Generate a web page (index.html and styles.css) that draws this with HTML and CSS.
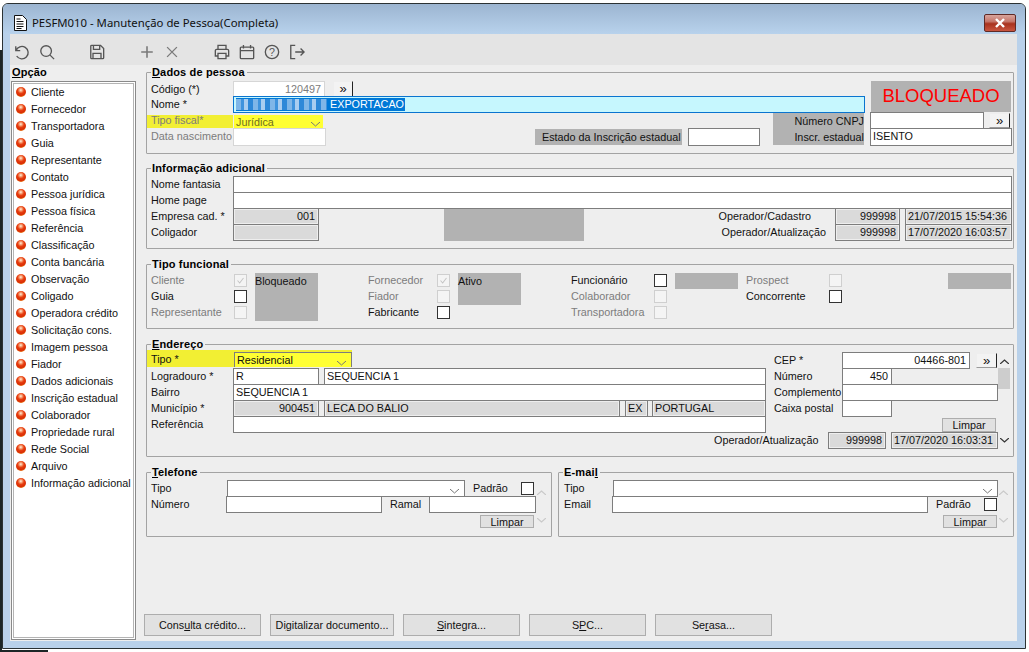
FILE: index.html
```html
<!DOCTYPE html>
<html lang="pt">
<head>
<meta charset="utf-8">
<title>PESFM010</title>
<link rel="stylesheet" href="styles.css">
</head>
<body>
<div class="window">
  <header class="titlebar">
    <svg class="doc-icon" viewBox="0 0 14 16" width="14" height="16"><path d="M1.5.5h8l4 4v11h-12z" fill="#fff" stroke="#111"/><path d="M3.5 4h4M3.5 6.500h7M3.500 9h7M3.500 11.500h7M3.500 13.500h5" stroke="#111" fill="none"/></svg>
    <span class="title">PESFM010 - Manutenção de Pessoa(Completa)</span>
    <span class="close"><svg viewBox="0 0 12 10" width="12" height="10"><path d="M2 1l8 8M10 1l-8 8" stroke="#fff" stroke-width="2.400" fill="none"/></svg></span>
  </header>
  <div class="content">
    <nav class="toolbar">
      <span class="tool"><svg viewBox="0 0 18 18"><path d="M2 2.500v5h5M2.300 7.500a7 7 0 1 1 .7 6"/></svg></span>
      <span class="tool"><svg viewBox="0 0 18 18"><circle cx="8" cy="8" r="6"/><path d="M12.500 12.500l4.500 4.500"/></svg></span>
      <span class="tool"></span>
      <span class="tool"><svg viewBox="0 0 18 18"><path d="M2 2.500a1 1 0 0 1 1-1h10l3.500 3.500v10.500a1 1 0 0 1-1 1h-12.500a1 1 0 0 1-1-1zM5 1.500v4.500h7v-4.500M4.500 16.500v-6h9v6"/></svg></span>
      <span class="tool"></span>
      <span class="tool tool-light"><svg viewBox="0 0 18 18"><path d="M9 2.500v13M2.500 9h13" stroke-width="1.800"/></svg></span>
      <span class="tool tool-light"><svg viewBox="0 0 18 18"><path d="M3.500 3.500l11 11M14.500 3.500l-11 11"/></svg></span>
      <span class="tool"></span>
      <span class="tool"><svg viewBox="0 0 18 18"><path d="M4.500 6v-4.500h9v4.500M4.500 13.500h-3v-6a1.500 1.500 0 0 1 1.500-1.500h12a1.500 1.500 0 0 1 1.500 1.500v6h-3M4.500 10.500h9v6h-9z"/></svg></span>
      <span class="tool"><svg viewBox="0 0 18 18"><path d="M2.500 3.500h13a1 1 0 0 1 1 1v11a1 1 0 0 1-1 1h-13a1 1 0 0 1-1-1v-11a1 1 0 0 1 1-1zM1.500 7.500h15M5 1v4M13 1v4"/></svg></span>
      <span class="tool"><svg viewBox="0 0 18 18"><circle cx="9" cy="9" r="7.500"/><text x="9" y="13" class="help-q">?</text></svg></span>
      <span class="tool"><svg viewBox="0 0 18 18"><path d="M7 1.500h-5v15h5M7 9h10M13 5l4 4-4 4"/></svg></span>
    </nav>
    <div class="body">
      <aside class="sidebar">
        <div class="side-label"><u>O</u>pção</div>
        <ul class="list">
          <li>Cliente</li><li>Fornecedor</li><li>Transportadora</li><li>Guia</li><li>Representante</li><li>Contato</li>
          <li>Pessoa jurídica</li><li>Pessoa física</li><li>Referência</li><li>Classificação</li><li>Conta bancária</li><li>Observação</li>
          <li>Coligado</li><li>Operadora crédito</li><li>Solicitação cons.</li><li>Imagem pessoa</li><li>Fiador</li><li>Dados adicionais</li>
          <li>Inscrição estadual</li><li>Colaborador</li><li>Propriedade rural</li><li>Rede Social</li><li>Arquivo</li><li>Informação adicional</li>
        </ul>
      </aside>
      <main class="main">
        <section class="group g1">
          <div class="legend"><u>D</u>ados de pessoa</div>
          <div class="g1-body">
            <div class="g1-left">
              <div class="g1-top">
                <div class="row r15"><span class="lbl">Código (*)</span><span class="in soft w92 right grey-text">120497</span><span class="more ml8 w20">»</span></div>
                <div class="row"><span class="lbl">Nome *</span><span class="in focus w632"><span class="sel"><span class="blur"></span> EXPORTACAO</span></span></div>
              </div>
              <div class="g1-bottom">
                <div class="g1-fields">
                  <div class="row r13"><span class="hl-small"><span class="lbl grey-text">Tipo fiscal*</span></span><span class="select-y">Jurídica<svg class="arrow" viewBox="0 0 9 5"><path d="M0 0l4.500 4 4.500-4"/></svg></span></div>
                  <div class="row r18"><span class="lbl grey-text">Data nascimento</span><span class="in soft w93 h18"></span><span class="tag w147 ml209">Estado da Inscrição estadual</span><span class="in w72 ml6 h18"></span></div>
                </div>
                <div class="cnpj-labels"><span>Número CNPJ</span><span>Inscr. estadual</span></div>
              </div>
            </div>
            <div class="g1-right">
              <div class="status">BLOQUEADO</div>
              <div class="row cnpj"><span class="in w114"></span><span class="more ml5 w21 more-low">»</span></div>
              <div class="row r18"><span class="in w142 h18">ISENTO</span></div>
            </div>
          </div>
        </section>

        <section class="group g2">
          <div class="legend">Informação adicional</div>
          <div class="rows">
            <div class="row"><span class="lbl">Nome fantasia</span><span class="in w779"></span></div>
            <div class="row"><span class="lbl">Home page</span><span class="in w779"></span></div>
            <div class="row-pair">
              <div class="pair-left">
                <div class="row"><span class="lbl">Empresa cad. *</span><span class="in off w86 right">001</span></div>
                <div class="row"><span class="lbl">Coligador</span><span class="in off w86"></span></div>
              </div>
              <div class="g2-block"></div>
              <div class="pair-right">
                <div class="row"><span class="op-label op1">Operador/Cadastro</span><span class="in off w65 right">999998</span><span class="in off w107 ml5">21/07/2015 15:54:36</span></div>
                <div class="row"><span class="op-label op2">Operador/Atualização</span><span class="in off w65 right">999998</span><span class="in off w107 ml5">17/07/2020 16:03:57</span></div>
              </div>
            </div>
          </div>
        </section>

        <section class="group g3">
          <div class="legend">Tipo funcional</div>
          <div class="func">
            <div class="fcol">
              <div class="checks">
                <label class="row fw87 grey-text"><span class="flbl">Cliente</span><span class="check soft-check"><svg viewBox="0 0 13 13"><path d="M3 6.500l2.500 3 4.500-6"/></svg></span></label>
                <label class="row fw87"><span class="flbl">Guia</span><span class="check"></span></label>
                <label class="row fw87 grey-text"><span class="flbl">Representante</span><span class="check soft-check"></span></label>
              </div>
              <div class="fblock h48">Bloqueado</div>
            </div>
            <div class="fcol ml46">
              <div class="checks">
                <label class="row fw73 grey-text"><span class="flbl">Fornecedor</span><span class="check soft-check"><svg viewBox="0 0 13 13"><path d="M3 6.500l2.500 3 4.500-6"/></svg></span></label>
                <label class="row fw73 grey-text"><span class="flbl">Fiador</span><span class="check soft-check"></span></label>
                <label class="row fw73"><span class="flbl">Fabricante</span><span class="check"></span></label>
              </div>
              <div class="fblock h32">Ativo</div>
            </div>
            <div class="fcol ml46">
              <div class="checks">
                <label class="row fw87"><span class="flbl">Funcionário</span><span class="check"></span></label>
                <label class="row fw87 grey-text"><span class="flbl">Colaborador</span><span class="check soft-check"></span></label>
                <label class="row fw87 grey-text"><span class="flbl">Transportadora</span><span class="check soft-check"></span></label>
              </div>
              <div class="fblock h16"></div>
            </div>
            <div class="fcol ml4">
              <div class="checks">
                <label class="row fw87 grey-text"><span class="flbl">Prospect</span><span class="check soft-check"></span></label>
                <label class="row fw87"><span class="flbl">Concorrente</span><span class="check"></span></label>
              </div>
              <div class="fblock h16 ml106"></div>
            </div>
          </div>
        </section>

        <section class="group g4">
          <div class="legend"><u>E</u>ndereço</div>
          <div class="end-wrap">
            <div class="end-content">
              <div class="end-top">
                <div class="end-left">
                  <div class="row"><span class="hl"><span class="lbl lbl-hl">Tipo *</span><span class="select-strong">Residencial<svg class="arrow" viewBox="0 0 9 5"><path d="M0 0l4.500 4 4.500-4"/></svg></span></span></div>
                  <div class="row"><span class="lbl">Logradouro *</span><span class="in w86">R</span><span class="in w442 ml5">SEQUENCIA 1</span></div>
                  <div class="row"><span class="lbl">Bairro</span><span class="in w533">SEQUENCIA 1</span></div>
                  <div class="row"><span class="lbl">Município *</span><span class="in off w86 right">900451</span><span class="in off w296 ml5">LECA DO BALIO</span><span class="in off w23 ml5">EX</span><span class="in off w114 ml4">PORTUGAL</span></div>
                  <div class="row"><span class="lbl">Referência</span><span class="in w533"></span></div>
                </div>
                <div class="end-right">
                  <div class="row"><span class="rlbl">CEP *</span><span class="in w128 right">04466-801</span><span class="more ml6 w21 more-low">»</span></div>
                  <div class="row"><span class="rlbl">Número</span><span class="in w50 right">450</span></div>
                  <div class="row"><span class="rlbl">Complemento</span><span class="in w156"></span></div>
                  <div class="row"><span class="rlbl">Caixa postal</span><span class="in w50"></span></div>
                  <div class="limpar-row"><span class="limpar">Limpar</span></div>
                </div>
              </div>
              <div class="row end-op"><span class="op-label op3">Operador/Atualização</span><span class="in off w58 right">999998</span><span class="in off w107 ml5">17/07/2020 16:03:31</span></div>
            </div>
            <div class="scroll">
              <svg class="chev" viewBox="0 0 9 5"><path d="M0 5l4.500-4 4.500 4"/></svg>
              <span class="thumb"></span>
              <svg class="chev chev-down" viewBox="0 0 9 5"><path d="M0 0l4.500 4 4.500-4"/></svg>
            </div>
          </div>
        </section>

        <div class="contacts">
          <section class="group g5 g-tel">
            <div class="legend"><u>T</u>elefone</div>
            <div class="con-wrap">
              <div class="con-rows">
                <div class="row"><span class="lbl w80">Tipo</span><span class="in w238 has-arrow"><svg class="arrow" viewBox="0 0 9 5"><path d="M0 0l4.500 4 4.500-4"/></svg></span><span class="con-lbl ml8 w48">Padrão</span><span class="check check-top"></span></div>
                <div class="row"><span class="lbl w79">Número</span><span class="in w156"></span><span class="con-lbl ml8 w39">Ramal</span><span class="in w107"></span></div>
                <div class="limpar-line"><span class="limpar ml333">Limpar</span></div>
              </div>
              <div class="scroll scroll-light">
                <svg class="chev" viewBox="0 0 9 5"><path d="M0 5l4.500-4 4.500 4"/></svg>
                <svg class="chev chev-down" viewBox="0 0 9 5"><path d="M0 0l4.500 4 4.500-4"/></svg>
              </div>
            </div>
          </section>
          <section class="group g5 g-mail">
            <div class="legend">E-mai<u>l</u></div>
            <div class="con-wrap">
              <div class="con-rows mail-rows">
                <div class="row"><span class="lbl lbl-m w53">Tipo</span><span class="in w385 has-arrow"><svg class="arrow" viewBox="0 0 9 5"><path d="M0 0l4.500 4 4.500-4"/></svg></span></div>
                <div class="row"><span class="lbl lbl-m w52">Email</span><span class="in w316"></span><span class="con-lbl ml8 w48">Padrão</span><span class="check check-top"></span></div>
                <div class="limpar-line"><span class="limpar ml384">Limpar</span></div>
              </div>
              <div class="scroll scroll-light">
                <svg class="chev" viewBox="0 0 9 5"><path d="M0 5l4.500-4 4.500 4"/></svg>
                <svg class="chev chev-down" viewBox="0 0 9 5"><path d="M0 0l4.500 4 4.500-4"/></svg>
              </div>
            </div>
          </section>
        </div>

        <div class="actions">
          <button class="action w117">Cons<u>u</u>lta crédito...</button>
          <button class="action w124">Di<u>g</u>italizar documento...</button>
          <button class="action w117"><u>S</u>integra...</button>
          <button class="action w117">S<u>P</u>C...</button>
          <button class="action w117">Se<u>r</u>asa...</button>
        </div>
      </main>
    </div>
  </div>
</div>
</body>
</html>
```
FILE: styles.css
```css
* { box-sizing: border-box; }
html, body { margin: 0; height: 100%; }
body {
  width: 1029px;
  height: 652px;
  overflow: hidden;
  background:
    linear-gradient(#1c2526, #1c2526) 0 50px / 2px 602px no-repeat,
    linear-gradient(#1c2526, #1c2526) 0 650px / 48px 2px no-repeat,
    #fff;
  font: 10.800px/14px "Liberation Sans", Arial, sans-serif;
  color: #111;
  padding: 3px 0 0 2px;
}
.window {
  width: 1024px;
  height: 646px;
  border: 1px solid #2b3234;
  border-radius: 6px 6px 0 0;
  background: #b9d1ea;
  padding: 0 8px 7px 7px;
  display: flex;
  flex-direction: column;
}
.titlebar {
  margin: 0 -8px 0 -7px;
  height: 30px;
  flex: none;
  background: linear-gradient(#9cb5d1, #b8d2ec);
  border-radius: 5px 5px 0 0;
  display: flex;
  align-items: center;
  padding: 7px 9px 0 10px;
}
.doc-icon { flex: none; }
.title {
  margin-left: 5px;
  font: 11.350px/16px "Noto Sans", sans-serif;
  color: #111;
  flex: 1;
}
.close {
  width: 32px;
  height: 18px;
  border: 1px solid #5f2a26;
  border-radius: 2px;
  background: linear-gradient(#d8a49c 0, #c6776b 40%, #a8321e 55%, #c9553f 100%);
  display: flex;
  align-items: center;
  justify-content: center;
}
.content {
  flex: 1;
  min-height: 0;
  background: #eee;
  display: flex;
  flex-direction: column;
}
.toolbar {
  height: 31px;
  flex: none;
  background: #e4e4e4;
  display: flex;
  align-items: center;
  padding: 4px 0 0 3px;
}
.tool { width: 25px; height: 16px; display: block; padding-left: 1px; }
.tool svg { width: 16px; height: 16px; display: block; fill: none; stroke: #555; stroke-width: 1.500; }
.tool-light svg { stroke: #7a7a7a; }
.tool svg .help-q { font: 12px "Liberation Sans", sans-serif; text-anchor: middle; fill: #555; stroke: none; }
.body { flex: 1; min-height: 0; display: flex; }

.sidebar { width: 136px; flex: none; padding: 0 0 1px 1px; display: flex; flex-direction: column; }
.side-label { height: 16px; line-height: 15px; font-size: 11px; letter-spacing: .15px; font-weight: bold; padding-left: 1px; color: #000; }
.list {
  flex: 1;
  margin: 0;
  padding: 2px 0 0 4px;
  list-style: none;
  width: 125px;
  background: #fff;
  border: 1px solid #8a8a8a;
  box-shadow: inset 0 0 0 1px #fff, inset 0 0 0 2px #b4b4b4;
}
.list li { height: 17px; line-height: 17px; display: flex; align-items: center; white-space: nowrap; }
.list li::before {
  content: "";
  flex: none;
  width: 10px;
  height: 10px;
  margin: -2px 5px 0 0;
  border-radius: 50%;
  background: radial-gradient(circle at 48% 32%, #fff2e0 0, #f8b088 14%, #e8400f 38%, #d92c06 62%, #f09a18 88%, #c98a30 100%);
}

.main { flex: 1; min-width: 0; padding: 7px 3px 5px 0; display: flex; flex-direction: column; }
.group { border: 1px solid #a3a3a3; border-radius: 1px; margin-top: 15px; flex: none; }
.legend {
  margin: -8px 0 0 4px;
  padding: 0 2px 0 1px;
  width: fit-content;
  height: 14px;
  line-height: 14px;
  font-size: 11px;
  letter-spacing: .15px;
  background: #eee;
  font-weight: bold;
  color: #000;
}
.g1 { margin-top: 0; height: 82px; margin-bottom: -1px; }
.g2 { height: 81px; }
.g3 { height: 65px; }
.g4 { height: 113px; }
.g5 { height: 65px; margin-top: 0; }

.row { display: flex; height: 16px; align-items: flex-start; }
.r13 { height: 13px; }
.r15 { height: 15px; }
.r18 { height: 18px; }
.lbl { width: 86px; padding-left: 4px; line-height: 16px; flex: none; white-space: nowrap; }
.grey-text { color: #7c7c7c; }

.in {
  display: block;
  flex: none;
  height: 17px;
  line-height: 15px;
  padding: 0 1px 0 2px;
  background: #fff;
  border: 1px solid #7d7d7d;
  white-space: nowrap;
  overflow: hidden;
  position: relative;
}
.in.right { text-align: right; padding-right: 3px; }
.in.soft { border-color: #d6d6d6; }
.in.off { background: #dadada; box-shadow: inset 0 0 0 1px #eee; }
.in.focus { border-color: #0a74cf; background: #c6f7fe; padding: 1px 2px; line-height: 13px; }
.h18 { height: 18px; }
.sel { display: inline-block; background: #0078d7; color: #fff; height: 13px; line-height: 13px; padding-right: 1px; }
.blur {
  display: inline-block;
  width: 91px;
  height: 11px;
  vertical-align: -2px;
  background:
    repeating-linear-gradient(90deg, #7fb6e8 0 5px, #3f93dd 5px 8px, #a9cdf0 8px 12px, #2e88d8 12px 17px);
}
.more {
  flex: none;
  height: 16px;
  background: #f3f3f3;
  border: 1px solid #eee;
  border-right: 1px solid #222;
  border-bottom: 1px solid #9a9a9a;
  text-align: center;
  line-height: 13px;
  font-size: 13px;
  color: #111;
}
.more-low { margin-top: 1px; height: 15px; }

.g1-body { display: flex; margin-top: 2px; }
.g1-left { width: 719px; flex: none; }
.g1-top { height: 32px; }
.g1-bottom { display: flex; }
.g1-fields { width: 626px; flex: none; padding-top: 2px; }
.hl-small { display: block; flex: none; width: 86px; height: 13px; background: #f2ef33; }
.hl-small .lbl { display: block; line-height: 11px; }
.select-y {
  display: flex;
  justify-content: space-between;
  align-items: flex-end;
  margin-left: 1px;
  width: 89px;
  height: 13px;
  line-height: 11px;
  padding: 0 3px 0 2px;
  background: #ffff33;
  color: #6e6e20;
}
.tag { flex: none; height: 16px; margin-top: 1px; background: #b2b2b2; line-height: 16px; padding-left: 7px; white-space: nowrap; }
.cnpj-labels {
  width: 91px;
  height: 32px;
  background: #b2b2b2;
  display: flex;
  flex-direction: column;
  text-align: right;
  line-height: 16px;
  white-space: nowrap;
}
.g1-right { margin-left: 4px; width: 142px; flex: none; }
.status {
  margin-left: 1px;
  width: 140px;
  height: 31px;
  background: #b2b2b2;
  color: #f00;
  font-size: 18.500px;
  line-height: 30px;
  text-align: center;
}
.cnpj { height: 16px; }

.rows { margin-top: 1px; }
.row-pair { display: flex; }
.pair-left { width: 172px; flex: none; }
.g2-block { margin: 1px 0 0 125px; width: 140px; height: 32px; background: #b2b2b2; flex: none; }
.pair-right { flex: 1; }
.pair-right .row { justify-content: flex-end; padding-right: 1px; }
.op-label { line-height: 16px; white-space: nowrap; text-align: left; flex: none; }
.op1 { margin-right: 24px; }
.op2 { margin-right: 9px; }

.func { display: flex; margin-top: 1px; }
.fcol { display: flex; flex: none; }
.ml46 { margin-left: 46px; }
.ml4 { margin-left: 4px; }
.ml106 { margin-left: 106px; }
.checks { flex: none; }
.checks .row { display: flex; }
.fw87 { width: 100px; padding-left: 4px; }
.fw73 { width: 86px; padding-left: 4px; }
.flbl { flex: 1; line-height: 16px; white-space: nowrap; }
.check {
  display: block;
  flex: none;
  width: 13px;
  height: 13px;
  margin-top: 2px;
  border: 1px solid #333;
  background: #fff;
}
.check.soft-check { border-color: #cfcfcf; background: #f4f4f4; }
.check svg { display: block; width: 11px; height: 11px; fill: none; stroke: #c4c4c4; stroke-width: 1.200; }
.fblock { width: 63px; flex: none; margin: 1px 0 0 8px; background: #b2b2b2; padding-left: 0; line-height: 16px; }
.h48 { height: 48px; }
.h32 { height: 32px; }
.h16 { height: 16px; }
.fblock.ml106 { margin-left: 106px; }

.end-wrap { display: flex; margin-top: -1px; }
.end-content { width: 851px; flex: none; padding-top: 2px; }
.end-top { display: flex; height: 80px; }
.end-left { width: 623px; flex: none; }
.end-right { flex: 1; padding-left: 4px; }
.hl {
  display: flex;
  align-items: flex-end;
  width: 205px;
  height: 17px;
  margin-top: -2px;
  background: #f2ef33;
}
.lbl-hl { width: 87px; }
.select-strong {
  display: flex;
  justify-content: space-between;
  align-items: flex-end;
  width: 118px;
  height: 15px;
  line-height: 14px;
  padding: 0 5px 0 2px;
  background: #ffff33;
  border: 1px solid #7d7d7d;
  border-bottom: 0;
}
.arrow { display: block; width: 9px; height: 5px; flex: none; fill: none; stroke: #777; stroke-width: 1; margin-bottom: 1px; }
.has-arrow .arrow { position: absolute; right: 5px; bottom: 1px; }
.rlbl { width: 68px; flex: none; line-height: 16px; white-space: nowrap; }
.limpar-row { display: flex; justify-content: flex-end; padding: 2px 2px 0 0; }
.limpar {
  display: block;
  flex: none;
  width: 54px;
  height: 14px;
  line-height: 13px;
  text-align: center;
  background: #e1e1e1;
  border: 1px solid #adadad;
}
.end-op { padding-left: 567px; }
.op3 { width: 114px; }

.scroll {
  width: 12px;
  flex: none;
  height: 97px;
  margin-top: 2px;
  display: flex;
  flex-direction: column;
  align-items: center;
  padding: 7px 0 6px;
}
.chev { display: block; width: 9px; height: 5px; flex: none; fill: none; stroke: #333; stroke-width: 1.300; }
.chev-down { margin-top: auto; }
.thumb { display: block; width: 12px; height: 21px; margin-top: 4px; background: #cdcdcd; }
.scroll-light { height: 47px; padding: 8px 0 6px; margin: 2px 0 0 -1px; }
.scroll-light .chev { stroke: #c9c9c9; stroke-width: 1.200; }

.contacts { display: flex; gap: 6px; margin-top: 15px; flex: none; }
.g-tel { width: 406px; }
.g-mail { width: 456px; }
.con-wrap { display: flex; margin-top: 1px; }
.con-rows { width: 389px; flex: none; }
.mail-rows { width: 439px; padding-left: 1px; }
.lbl-m { padding-left: 4px; }
.con-lbl { flex: none; line-height: 16px; }
.check-top { margin-top: 2px; }
.limpar-line { padding-top: 3px; }
.ml333 { margin-left: 333px; height: 13px; line-height: 12px; }
.ml384 { margin-left: 383px; height: 13px; line-height: 12px; }

.actions { margin: auto 0 0 -2px; display: flex; gap: 9px; flex: none; }
.action {
  height: 22px;
  padding: 0;
  font: inherit;
  color: #111;
  background: #e1e1e1;
  border: 1px solid #adadad;
  border-radius: 0;
}

.ml5 { margin-left: 5px; }
.ml6 { margin-left: 6px; }
.ml8 { margin-left: 8px; }
.ml209 { margin-left: 209px; }
.w20 { width: 20px; }
.w21 { width: 21px; }
.w23 { width: 23px; }
.w39 { width: 39px; }
.w48 { width: 48px; }
.w50 { width: 50px; }
.w52 { width: 52px; }
.w53 { width: 53px; }
.w58 { width: 58px; }
.w65 { width: 65px; }
.w72 { width: 72px; }
.w79 { width: 79px; }
.w80 { width: 80px; }
.w86 { width: 86px; }
.w92 { width: 92px; }
.w93 { width: 93px; }
.w107 { width: 107px; }
.w114 { width: 114px; }
.w117 { width: 117px; }
.w124 { width: 124px; }
.w128 { width: 128px; }
.w142 { width: 142px; }
.w147 { width: 147px; }
.w156 { width: 156px; }
.w238 { width: 238px; }
.w296 { width: 296px; }
.w316 { width: 316px; }
.w385 { width: 385px; }
.w442 { width: 442px; }
.w533 { width: 533px; }
.w632 { width: 632px; }
.w779 { width: 779px; }
```
